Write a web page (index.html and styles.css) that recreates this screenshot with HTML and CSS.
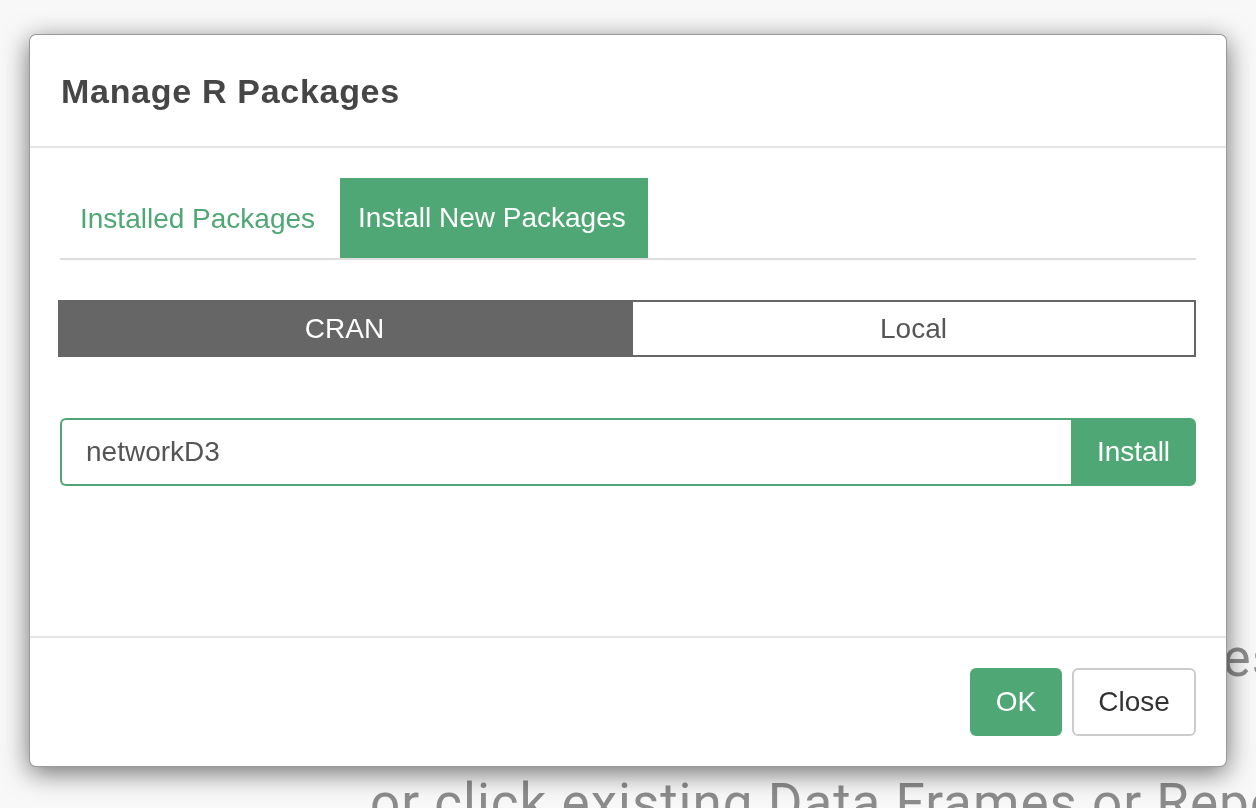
FILE: index.html
```html
<!DOCTYPE html>
<html lang="en">
<head>
    <meta http-equiv="Content-Type" content="text/html; charset=utf-8"/>
    <link rel="stylesheet" href="styles.css">
</head>
<body>
<div class="page">
    <p class="hint hint_top">Drag and Drop Data Files</p>
    <p class="hint hint_bottom">or click existing Data Frames or Reports</p>
</div>

<div class="modal">
    <div class="modal_header">
        <h4 class="modal_title">Manage R Packages</h4>
    </div>
    <div class="modal_body">
        <ul class="nav_tabs">
            <li class="tab">Installed Packages</li>
            <li class="tab active">Install New Packages</li>
        </ul>
        <div class="source_toggle">
            <button class="toggle_btn selected">CRAN</button>
            <button class="toggle_btn">Local</button>
        </div>
        <div class="input_group">
            <input class="form_control" type="text" value="networkD3">
            <button class="btn btn_green btn_addon">Install</button>
        </div>
    </div>
    <div class="modal_footer">
        <button class="btn btn_green btn_ok">OK</button>
        <button class="btn btn_default btn_close">Close</button>
    </div>
</div>
</body>
</html>
```

FILE: styles.css
```css
html, body {
    margin: 0;
    height: 100%;
    overflow: hidden;
}

body {
    background: #f8f8f8;
    font-family: "Liberation Sans", Arial, sans-serif;
    font-size: 28px;
    color: #333;
}

/* page behind the dialog */
.page {
    padding-top: 632px;
}

.hint {
    margin: 0;
    font-family: Roboto, "Liberation Sans", sans-serif;
    font-size: 53px;
    line-height: 53px;
    color: #8c8c8c;
    white-space: nowrap;
    letter-spacing: 1px;
}

.hint_top {
    text-align: right;
    margin-right: -24px;
}

.hint_bottom {
    margin-top: 92px;
    padding-left: 370px;
}

/* dialog */
.modal {
    position: fixed;
    left: 29px;
    top: 34px;
    width: 1198px;
    box-sizing: border-box;
    background: #fff;
    border: 1px solid rgba(0, 0, 0, 0.4);
    border-radius: 7px;
    box-shadow: 0 6px 26px rgba(0, 0, 0, 0.55);
}

.modal_header {
    padding: 37px 31px 36px;
    border-bottom: 2px solid #e5e5e5;
}

.modal_title {
    margin: 0;
    font-size: 34px;
    line-height: 38px;
    font-weight: 600;
    letter-spacing: 0.7px;
    color: #464646;
}

.modal_body {
    padding: 30px 30px 150px;
}

.nav_tabs {
    display: flex;
    margin: 0;
    padding: 0;
    list-style: none;
    border-bottom: 2px solid #ddd;
}

.tab {
    height: 80px;
    padding: 0 20px;
    margin-right: 5px;
    display: flex;
    align-items: center;
    padding-top: 2px;
    box-sizing: border-box;
    color: #4ea774;
}

.tab.active {
    padding-top: 0;
    background: #4ea774;
    color: #fff;
    padding-right: 22px;
    padding-left: 18px;
}

.source_toggle {
    display: grid;
    grid-template-columns: 573px 1fr;
    margin: 40px 0 0 -2px;
    height: 57px;
}

.toggle_btn {
    font-family: inherit;
    font-size: 28px;
    border: 2px solid #666;
    background: #fff;
    color: #555;
    padding: 0;
}

.toggle_btn.selected {
    background: #666;
    color: #fff;
}

.input_group {
    display: flex;
    margin-top: 61px;
    height: 68px;
}

.form_control {
    flex: 1;
    min-width: 0;
    box-sizing: border-box;
    border: 2px solid #4ea774;
    border-right: 0;
    border-radius: 6px 0 0 6px;
    padding: 0 24px;
    font-family: inherit;
    font-size: 28px;
    color: #555;
    outline: none;
}

.btn {
    font-family: inherit;
    font-size: 28px;
    height: 68px;
    padding: 0;
    border-radius: 6px;
    cursor: pointer;
}

.btn_green {
    background: #4ea774;
    border: 2px solid #4ea774;
    color: #fff;
}

.btn_addon {
    width: 125px;
    border-radius: 0 6px 6px 0;
}

.modal_footer {
    display: flex;
    justify-content: flex-end;
    gap: 10px;
    padding: 30px;
    border-top: 2px solid #e5e5e5;
}

.btn_ok {
    width: 92px;
}

.btn_default {
    background: #fff;
    border: 2px solid #ccc;
    color: #333;
}

.btn_close {
    width: 124px;
}
```
